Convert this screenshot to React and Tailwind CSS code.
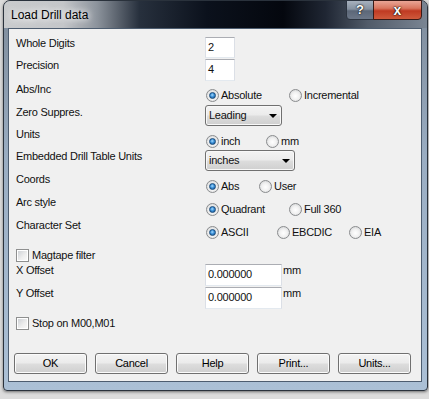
import React from 'react';

const BTN_BG =
  'bg-[linear-gradient(to_bottom,#f3f3f3_0%,#ebebeb_48%,#dddddd_52%,#cfcfcf_100%)]';

function Radio({ checked, label, width }) {
  return (
    <div className={`flex items-center gap-[2px] ${width}`}>
      <span className="flex h-[13px] w-[13px] shrink-0 items-center justify-center rounded-full border border-[#8a8c8e] bg-[radial-gradient(circle_at_50%_55%,#ffffff_0%,#f1f1f1_45%,#c9cbcd_100%)]">
        {checked && (
          <span className="h-[7px] w-[7px] rounded-full border border-[#1a4b7a] bg-[radial-gradient(circle_at_45%_40%,#a7dcff_0%,#3b90d8_45%,#0f4a88_100%)]" />
        )}
      </span>
      <span>{label}</span>
    </div>
  );
}

function Check({ label }) {
  return (
    <div className="flex items-center gap-[3px]">
      <span className="h-[13px] w-[13px] border border-[#8e8f8f] bg-white p-[1px]">
        <span className="block h-full w-full bg-[linear-gradient(135deg,#cfd2d6_0%,#eeeeee_60%,#f8f8f8_100%)]" />
      </span>
      <span>{label}</span>
    </div>
  );
}

function TextBox({ value, width, height = 'h-[21px]' }) {
  return (
    <div
      className={`${width} ${height} border border-[#abadb3] border-x-[#dbdfe6] border-b-[#e3e9ef] bg-white pl-[2px] leading-[19px]`}
    >
      {value}
    </div>
  );
}

function Combo({ value, width }) {
  return (
    <div
      className={`flex h-[21px] ${width} items-center justify-between rounded-[3px] border border-[#707070] ${BTN_BG} pl-[3px] pr-[4px] shadow-[inset_0_0_0_1px_#f8f8f8]`}
    >
      <span>{value}</span>
      <span className="h-0 w-0 border-x-[4px] border-t-[4px] border-x-transparent border-t-black" />
    </div>
  );
}

function Row({ label, h, children, ctl = 'mt-0' }) {
  return (
    <div className={`flex items-start ${h}`}>
      <div className="w-[189px] leading-[13px]">{label}</div>
      <div className={`flex items-start ${ctl}`}>{children}</div>
    </div>
  );
}

function Button({ children }) {
  return (
    <button
      className={`h-[21px] w-[73px] rounded-[3px] border border-[#707070] ${BTN_BG} text-[11px] text-black shadow-[inset_0_0_0_1px_#fbfbfb]`}
    >
      {children}
    </button>
  );
}

export default function App() {
  return (
    <div className="h-[399px] w-[429px] overflow-hidden bg-[#dcdcdc] font-['Liberation_Sans',Arial,sans-serif] text-[11px] tracking-[-0.25px] text-[#111]">
      <div className="ml-[3px] flex h-[391px] w-[425px] flex-col rounded-t-[7px] rounded-b-[4px] border border-[#2a323c] bg-[linear-gradient(to_bottom,#7d8a99_0%,#9aadc2_40%,#abc0d6_100%)] shadow-[0_1px_3px_rgba(0,0,0,0.5)]">
        {/* Title bar */}
        <div className="flex h-[27px] shrink-0 rounded-t-[6px] bg-[linear-gradient(to_right,#c9cbcd_0%,#c4c6c9_14%,#8c939c_22%,#27303d_32%,#0b111c_48%,#04070e_66%,#1f2633_76%,#515b69_86%,#7a8593_100%)]">
          <div className="pl-[7px] pt-[7px] text-[12px] leading-[15px] tracking-normal text-black [text-shadow:0_0_6px_#ffffff,0_0_10px_#ffffff]">
            Load Drill data
          </div>
          <div className="ml-auto mr-[5px] -mt-[1px] flex h-[20px] tracking-normal">
            <div className="flex w-[28px] items-center justify-center rounded-bl-[4px] border border-[#2c3440] bg-[linear-gradient(to_bottom,#a7b1be_0%,#8591a0_45%,#5c6778_55%,#6c7788_100%)] text-[13px] font-bold text-white [text-shadow:0_0_2px_#000,0_0_1px_#000]">
              ?
            </div>
            <div className="-ml-[1px] flex w-[49px] items-center justify-center rounded-br-[4px] border border-[#3a1a16] bg-[linear-gradient(to_bottom,#e9a596_0%,#d9765f_40%,#c03a22_55%,#cf5a3c_100%)] text-[14px] font-bold leading-none text-white [text-shadow:0_0_2px_#000,0_0_1px_#000]">
              x
            </div>
          </div>
        </div>

        {/* Frame + client */}
        <div className="flex flex-1 pb-[8px] pl-[4px] pr-[5px]">
          <div className="flex h-[354px] flex-1 flex-col border border-[#4d5d70] bg-[#f0f0f0] pl-[7px] pt-[8px]">
            <Row label="Whole Digits" h="h-[22px]">
              <TextBox value="2" width="w-[30px]" />
            </Row>
            <Row label="Precision" h="h-[22px]">
              <TextBox value="4" width="w-[30px]" height="h-[22px]" />
            </Row>
            <Row label={<div className="mt-[2px]">Abs/Inc</div>} h="h-[24px]" ctl="mt-[6px] ml-[1px]">
              <Radio checked label="Absolute" width="w-[83px]" />
              <Radio label="Incremental" width="w-[80px]" />
            </Row>
            <Row label={<div className="mt-[1px]">Zero Suppres.</div>} h="h-[23px]">
              <Combo value="Leading" width="w-[77px]" />
            </Row>
            <Row label="Units" h="h-[22px]" ctl="mt-[5px] ml-[1px]">
              <Radio checked label="inch" width="w-[60px]" />
              <Radio label="mm" width="w-[40px]" />
            </Row>
            <Row label="Embedded Drill Table Units" h="h-[23px]">
              <Combo value="inches" width="w-[90px]" />
            </Row>
            <Row label="Coords" h="h-[23px]" ctl="mt-[5px] ml-[1px]">
              <Radio checked label="Abs" width="w-[53px]" />
              <Radio label="User" width="w-[50px]" />
            </Row>
            <Row label="Arc style" h="h-[23px]" ctl="mt-[5px] ml-[1px]">
              <Radio checked label="Quadrant" width="w-[83px]" />
              <Radio label="Full 360" width="w-[70px]" />
            </Row>
            <Row label="Character Set" h="h-[27px]" ctl="mt-[5px] ml-[1px]">
              <Radio checked label="ASCII" width="w-[71px]" />
              <Radio label="EBCDIC" width="w-[72px]" />
              <Radio label="EIA" width="w-[40px]" />
            </Row>
            <div className="h-[18px] pt-[1px]">
              <Check label="Magtape filter" />
            </div>
            <Row label="X Offset" h="h-[23px]">
              <TextBox value="0.000000" width="w-[77px]" height="h-[22px]" />
              <span className="ml-[1px] leading-[13px]">mm</span>
            </Row>
            <Row label="Y Offset" h="h-[22px]">
              <TextBox value="0.000000" width="w-[77px]" height="h-[22px]" />
              <span className="ml-[1px] leading-[13px]">mm</span>
            </Row>
            <div className="mt-[6px] h-[13px]">
              <Check label="Stop on M00,M01" />
            </div>
            <div className="mt-[25px] -ml-[2px] flex gap-[8px]">
              <Button>OK</Button>
              <Button>Cancel</Button>
              <Button>Help</Button>
              <Button>Print...</Button>
              <Button>Units...</Button>
            </div>
          </div>
        </div>
      </div>
    </div>
  );
}
